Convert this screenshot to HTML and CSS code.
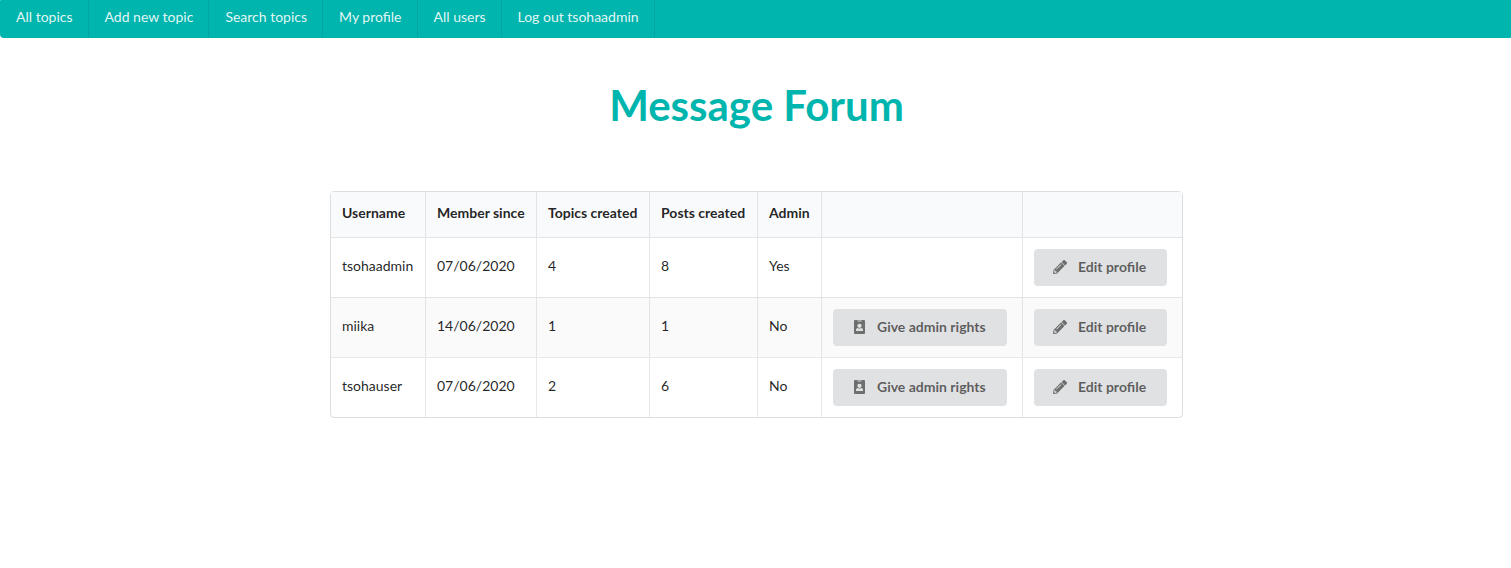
FILE: index.html
```html
<!DOCTYPE html>
<html lang="en">
<head>
<meta charset="utf-8">
<title>Message Forum</title>
<link rel="stylesheet" href="styles.css">
</head>
<body>
<svg class="defs" width="0" height="0">
  <symbol id="badge" viewBox="0 0 14 14"><path fill-rule="evenodd" d="M3 0H5.500v1.700h4V0H12q1 0 1 1v12q0 1-1 1H3q-1 0-1-1V1q0-1 1-1zM7.500 3.700a2.150 2.150 0 1 0 0 4.300 2.150 2.150 0 0 0 0-4.300zM4 11h7v-1.200q0-1.600-1.800-1.800-.8.500-1.700.5t-1.700-.5Q4 8.200 4 9.800z"/><path opacity=".5" d="M5.500 0h4v1.700h-4z"/></symbol>
  <symbol id="pencil" viewBox="0 0 512 512"><path d="M497.900 142.100l-46.100 46.100c-4.700 4.700-12.300 4.700-17 0l-111-111c-4.700-4.700-4.700-12.300 0-17l46.100-46.100c18.700-18.700 49.100-18.700 67.900 0l60.100 60.100c18.800 18.700 18.800 49.100 0 67.900z"/><path fill-rule="evenodd" d="M290 94L21.600 362.400.4 483.900c-2.900 16.400 11.400 30.600 27.800 27.800l121.500-21.300L418 222zM124.100 339.900c-5.500-5.500-5.500-14.300 0-19.800l154-154c5.500-5.500 14.300-5.500 19.800 0s5.500 14.300 0 19.800l-154 154c-5.500 5.500-14.300 5.500-19.800 0zM88 424h48v36.300l-64.500 11.300-31.100-31.100L51.700 376H88v48z"/><path opacity=".4" d="M290 94l34-17 111 111-17 34z"/></symbol>
</svg>
<nav class="menu">
  <a class="item">All topics</a><a class="item">Add new topic</a><a class="item">Search topics</a><a class="item">My profile</a><a class="item">All users</a><a class="item">Log out tsohaadmin</a>
</nav>
<h1 class="title">Message Forum</h1>
<table class="users">
<colgroup><col class="c1"><col class="c2"><col class="c3"><col class="c4"><col class="c5"><col class="c6"><col class="c7"></colgroup>
<thead><tr><th>Username</th><th>Member since</th><th>Topics created</th><th>Posts created</th><th>Admin</th><th></th><th></th></tr></thead>
<tbody>
<tr><td>tsohaadmin</td><td>07/06/2020</td><td>4</td><td>8</td><td>Yes</td><td></td><td><button class="button"><svg class="icon"><use href="#pencil"/></svg>Edit profile</button></td></tr>
<tr><td>miika</td><td>14/06/2020</td><td>1</td><td>1</td><td>No</td><td><button class="button"><svg class="icon"><use href="#badge"/></svg>Give admin rights</button></td><td><button class="button"><svg class="icon"><use href="#pencil"/></svg>Edit profile</button></td></tr>
<tr><td>tsohauser</td><td>07/06/2020</td><td>2</td><td>6</td><td>No</td><td><button class="button"><svg class="icon"><use href="#badge"/></svg>Give admin rights</button></td><td><button class="button"><svg class="icon"><use href="#pencil"/></svg>Edit profile</button></td></tr>
</tbody>
</table>
</body>
</html>
```
FILE: styles.css
```css
* { box-sizing: border-box; }
body { margin: 0; background: #fff; font: 14px/20px Lato, sans-serif; color: rgba(0,0,0,.87); }
.defs { display: block; }
.menu { display: flex; height: 38px; background: #00b5ad; border-radius: 1px 0 1px 4px; }
.item { padding: 10px 15px 14px 16px; line-height: 14px; color: rgba(255,255,255,.9); border-right: 1px solid rgba(34,36,38,.1); }
.title { margin: 40px 0 0; padding-left: 2px; font-size: 42px; line-height: 54px; font-weight: 700; color: #00b5ad; text-align: center; }
.users { width: 853px; margin: 59px 0 0 330px; table-layout: fixed; border: 1px solid rgba(34,36,38,.15); border-radius: 4px; border-collapse: separate; border-spacing: 0; }
.c1 { width: 94px; }
.c2 { width: 111px; }
.c3 { width: 113px; }
.c4 { width: 108px; }
.c5 { width: 64px; }
.c6 { width: 201px; }
.c7 { width: 160px; }
th, td { padding: 0 11px; text-align: left; white-space: nowrap; border-left: 1px solid rgba(34,36,38,.1); }
th:first-child, td:first-child { border-left: 0; }
th { height: 46px; padding-bottom: 3px; background: #f9fafb; font-weight: 700; border-bottom: 1px solid rgba(34,36,38,.1); }
td { height: 60px; padding-bottom: 3px; border-top: 1px solid rgba(34,36,38,.1); }
td:nth-child(n+6) { padding-bottom: 0; }
tbody tr:first-child td { height: 59px; border-top: 0; }
tbody tr:nth-child(2) { background: rgba(0,0,50,.02); }
.button { display: flex; align-items: center; height: 37px; margin: 0; padding: 0 21px 2px 19px; border: 0; border-radius: 4px; background: #e0e1e2; color: rgba(0,0,0,.6); font: 700 14px/14px Lato, sans-serif; }
.icon { width: 14px; height: 14px; margin-right: 11px; fill: currentColor; opacity: .85; }
```
